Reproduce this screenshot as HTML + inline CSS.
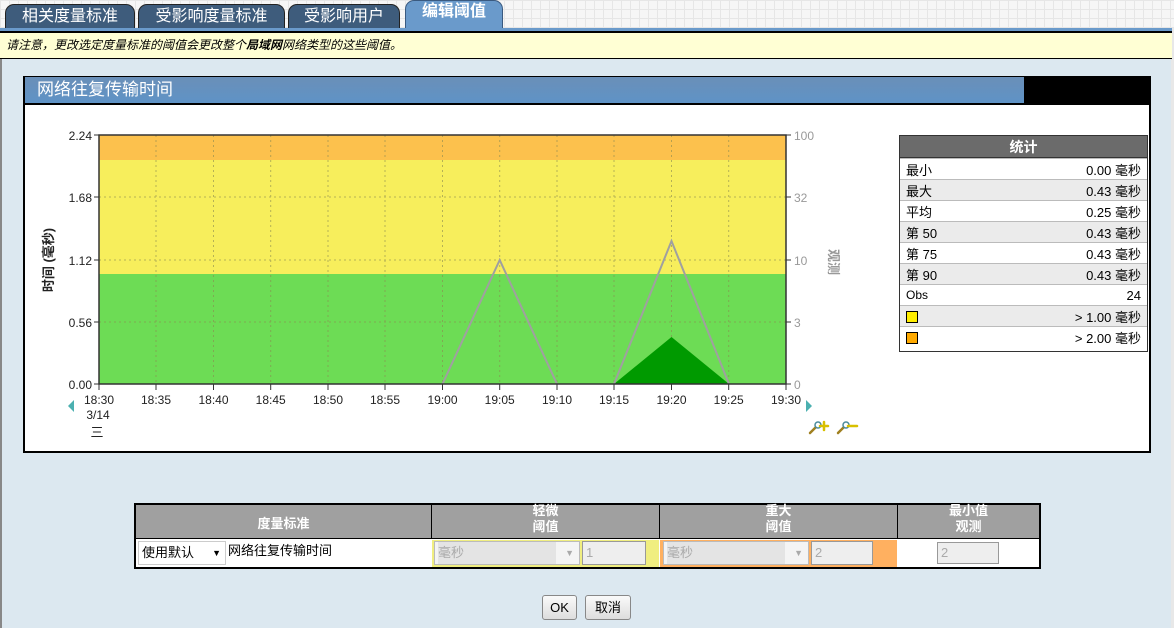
<!DOCTYPE html>
<html><head><meta charset="utf-8"><style>
*{margin:0;padding:0;box-sizing:border-box}
body{width:1174px;height:628px;overflow:hidden;position:relative;background:#dce8f0;font-family:"Liberation Sans","Noto Sans CJK SC",sans-serif;font-size:13px}
.abs{position:absolute}
.tabbar{left:0;top:0;width:1174px;height:28px;background-color:#f6f6f6;background-image:linear-gradient(#e6e6e6 1px,transparent 1px),linear-gradient(90deg,#e6e6e6 1px,transparent 1px);background-size:9px 9px}
.tab{top:4px;height:24px;background:#3e5c7c;border:1px solid #222;border-bottom:none;border-radius:9px 9px 0 0;color:#fff;font-size:16px;text-align:center;line-height:23px}
.tab.act{top:0;height:29px;background:#6a9acb;line-height:22px;border-color:#3a5a80;font-weight:bold}
.stat td{height:21px;padding:0 6px;font-size:13px;border-top:1px solid #bbb}
</style></head><body>
<div class="abs" style="left:0;top:0;width:2px;height:628px;background:#888"></div>
<div class="abs" style="left:1171px;top:0;width:3px;height:628px;background:#e8e8e8"></div>
<div class="abs tabbar"></div>
<div class="abs tab" style="left:5px;width:130px">相关度量标准</div>
<div class="abs tab" style="left:138px;width:147px">受影响度量标准</div>
<div class="abs tab" style="left:288px;width:112px">受影响用户</div>
<div class="abs tab act" style="left:405px;width:98px">编辑阈值</div>
<div class="abs" style="left:0;top:28px;width:1172px;height:3px;background:#6a9acb"></div>
<div class="abs" style="left:0;top:31px;width:1172px;height:2px;background:#000"></div>
<div class="abs" style="left:0;top:33px;width:1172px;height:26px;background:#ffffd4;border-bottom:1px solid #000;font-size:12px;font-style:italic;line-height:25px;padding-left:6px">请注意，更改选定度量标准的阈值会更改整个<b>局域网</b>网络类型的这些阈值。</div>

<div class="abs" style="left:23px;top:76px;width:1128px;height:377px;border:2px solid #000;background:#fff"></div>
<div class="abs" style="left:25px;top:77px;width:1000px;height:26px;background:linear-gradient(#6a8fb8,#5f93c6);color:#fff;font-size:17px;line-height:26px;padding-left:12px">网络往复传输时间</div>
<div class="abs" style="left:1024px;top:77px;width:125px;height:26px;background:#000"></div>
<div class="abs" style="left:25px;top:103px;width:1124px;height:2px;background:#000"></div>

<svg class="abs" style="left:0;top:0" width="1174" height="628">
<rect x="99" y="135" width="687" height="25" fill="#fcc14d"/>
<rect x="99" y="160" width="687" height="114" fill="#f7ee5c"/>
<rect x="99" y="274" width="687" height="110" fill="#6ddc55"/>
<g stroke="#8a8a50" stroke-dasharray="2,3" stroke-width="1" opacity="0.6">
<line x1="99" y1="197" x2="786" y2="197"/><line x1="99" y1="260" x2="786" y2="260"/><line x1="99" y1="322" x2="786" y2="322"/>
<line x1="156" y1="135" x2="156" y2="384"/><line x1="213.5" y1="135" x2="213.5" y2="384"/><line x1="270.7" y1="135" x2="270.7" y2="384"/><line x1="328" y1="135" x2="328" y2="384"/><line x1="385" y1="135" x2="385" y2="384"/><line x1="442.5" y1="135" x2="442.5" y2="384"/><line x1="499.7" y1="135" x2="499.7" y2="384"/><line x1="557" y1="135" x2="557" y2="384"/><line x1="614" y1="135" x2="614" y2="384"/><line x1="671.5" y1="135" x2="671.5" y2="384"/><line x1="728.7" y1="135" x2="728.7" y2="384"/>
</g>
<polygon points="614,384 671.5,337 729,384" fill="#009a00"/>
<polyline points="442.5,384 499.7,260 557,384" fill="none" stroke="#a0a0a0" stroke-width="2"/>
<polyline points="614,384 671.5,241 729,384" fill="none" stroke="#a0a0a0" stroke-width="2"/>
<rect x="99" y="135" width="687" height="249" fill="none" stroke="#333" stroke-width="1.5"/>
<g stroke="#333"><line x1="94" y1="135" x2="99" y2="135"/><line x1="94" y1="197" x2="99" y2="197"/><line x1="94" y1="260" x2="99" y2="260"/><line x1="94" y1="322" x2="99" y2="322"/><line x1="94" y1="384" x2="99" y2="384"/>
<line x1="786" y1="135" x2="791" y2="135"/><line x1="786" y1="197" x2="791" y2="197"/><line x1="786" y1="260" x2="791" y2="260"/><line x1="786" y1="322" x2="791" y2="322"/><line x1="786" y1="384" x2="791" y2="384"/>
<line x1="99" y1="384" x2="99" y2="390"/><line x1="156" y1="384" x2="156" y2="390"/><line x1="213.5" y1="384" x2="213.5" y2="390"/><line x1="270.7" y1="384" x2="270.7" y2="390"/><line x1="328" y1="384" x2="328" y2="390"/><line x1="385" y1="384" x2="385" y2="390"/><line x1="442.5" y1="384" x2="442.5" y2="390"/><line x1="499.7" y1="384" x2="499.7" y2="390"/><line x1="557" y1="384" x2="557" y2="390"/><line x1="614" y1="384" x2="614" y2="390"/><line x1="671.5" y1="384" x2="671.5" y2="390"/><line x1="728.7" y1="384" x2="728.7" y2="390"/><line x1="786" y1="384" x2="786" y2="390"/></g>
<g font-family="Liberation Sans,sans-serif" font-size="12" fill="#222" text-anchor="end">
<text x="92" y="140">2.24</text><text x="92" y="202">1.68</text><text x="92" y="265">1.12</text><text x="92" y="327">0.56</text><text x="92" y="389">0.00</text></g>
<g font-family="Liberation Sans,sans-serif" font-size="12" fill="#999"><text x="794" y="140">100</text><text x="794" y="202">32</text><text x="794" y="265">10</text><text x="794" y="327">3</text><text x="794" y="389">0</text></g>
<g font-family="Liberation Sans,sans-serif" font-size="12" fill="#222" text-anchor="middle">
<text x="99" y="404">18:30</text><text x="156" y="404">18:35</text><text x="213.5" y="404">18:40</text><text x="270.7" y="404">18:45</text><text x="328" y="404">18:50</text><text x="385" y="404">18:55</text><text x="442.5" y="404">19:00</text><text x="499.7" y="404">19:05</text><text x="557" y="404">19:10</text><text x="614" y="404">19:15</text><text x="671.5" y="404">19:20</text><text x="728.7" y="404">19:25</text><text x="786" y="404">19:30</text>
<text x="98" y="419">3/14</text><text x="97" y="437" font-family="Noto Sans CJK SC,sans-serif" font-size="13">三</text></g>
<text transform="translate(53,260) rotate(-90)" text-anchor="middle" font-family="Liberation Sans,Noto Sans CJK SC,sans-serif" font-size="13" font-weight="bold" fill="#222">时间 (毫秒)</text>
<text transform="translate(829,262) rotate(90)" text-anchor="middle" font-family="Noto Sans CJK SC,sans-serif" font-size="13" font-weight="bold" fill="#999">观测</text>
<polygon points="74,400 68,406 74,412" fill="#4bb0b0"/>
<polygon points="806,400 812,406 806,412" fill="#4bb0b0"/>
<g stroke-width="2.5" stroke-linecap="round"><line x1="810" y1="433" x2="816" y2="427" stroke="#a08020"/><circle cx="818" cy="425" r="3" fill="#fff" stroke="#4a8a9a" stroke-width="1.5"/><line x1="820" y1="426" x2="828" y2="426" stroke="#d8c000"/><line x1="824" y1="422" x2="824" y2="430" stroke="#d8c000"/>
<line x1="838" y1="433" x2="844" y2="427" stroke="#a08020"/><circle cx="846" cy="425" r="3" fill="#fff" stroke="#4a8a9a" stroke-width="1.5"/><line x1="848" y1="426" x2="857" y2="426" stroke="#d8c000"/></g>
</svg>

<div class="abs" style="left:899px;top:135px;width:249px;height:217px;border:1px solid #333;background:#fff">
<div style="height:22px;background:#6b6b6b;color:#fff;font-weight:bold;text-align:center;line-height:22px;font-size:14px;border-bottom:1px solid #333">统计</div>
<table class="stat" style="width:100%;border-collapse:collapse">
<tr><td style="background:#fff">最小</td><td style="text-align:right;background:#fff">0.00 毫秒</td></tr>
<tr><td style="background:#ebebeb">最大</td><td style="text-align:right;background:#ebebeb">0.43 毫秒</td></tr>
<tr><td style="background:#fff">平均</td><td style="text-align:right;background:#fff">0.25 毫秒</td></tr>
<tr><td style="background:#ebebeb">第 50</td><td style="text-align:right;background:#ebebeb">0.43 毫秒</td></tr>
<tr><td style="background:#fff">第 75</td><td style="text-align:right;background:#fff">0.43 毫秒</td></tr>
<tr><td style="background:#ebebeb">第 90</td><td style="text-align:right;background:#ebebeb">0.43 毫秒</td></tr>
<tr><td style="background:#fff;font-size:12px">Obs</td><td style="text-align:right;background:#fff">24</td></tr>
<tr><td style="background:#ebebeb"><span style="display:inline-block;width:12px;height:12px;background:#ffee00;border:1px solid #000;vertical-align:middle"></span></td><td style="text-align:right;background:#ebebeb">&gt; 1.00 毫秒</td></tr>
<tr><td style="background:#fff"><span style="display:inline-block;width:12px;height:12px;background:#ffaa00;border:1px solid #000;vertical-align:middle"></span></td><td style="text-align:right;background:#fff">&gt; 2.00 毫秒</td></tr>
</table></div>

<div class="abs" style="left:134px;top:503px;width:907px;height:66px;border:2px solid #000;background:#fff"></div>
<div class="abs" style="left:136px;top:505px;width:903px;height:34px;background:#a0a0a0;border-bottom:1px solid #000"></div>
<div class="abs" style="left:431px;top:505px;width:1px;height:34px;background:#000"></div>
<div class="abs" style="left:659px;top:505px;width:1px;height:34px;background:#000"></div>
<div class="abs" style="left:897px;top:505px;width:1px;height:34px;background:#000"></div>
<div class="abs" style="left:136px;top:513px;width:295px;text-align:center;color:#fff;font-weight:bold;font-size:13px">度量标准</div>
<div class="abs" style="left:432px;top:503px;width:227px;text-align:center;color:#fff;font-weight:bold;font-size:13px;line-height:16px">轻微<br>阈值</div>
<div class="abs" style="left:660px;top:503px;width:237px;text-align:center;color:#fff;font-weight:bold;font-size:13px;line-height:16px">重大<br>阈值</div>
<div class="abs" style="left:898px;top:503px;width:141px;text-align:center;color:#fff;font-weight:bold;font-size:13px;line-height:16px">最小值<br>观测</div>
<div class="abs" style="left:432px;top:540px;width:227px;height:27px;background:#f0ee80"></div>
<div class="abs" style="left:660px;top:540px;width:237px;height:27px;background:#ffb060"></div>
<div class="abs" style="left:138px;top:541px;width:88px;height:24px;border:1px solid #ccc;background:#fff;font-size:13px;line-height:22px;padding-left:3px">使用默认 <span style="font-size:9px;position:absolute;right:4px">▼</span></div>
<div class="abs" style="left:228px;top:540px;font-size:13px">网络往复传输时间</div>
<div class="abs" style="left:434px;top:541px;width:146px;height:24px;border:1px solid #bbb;background:#f4f4f4;color:#aaa;line-height:22px;padding-left:3px"><span style="background:#e4e4e4;display:inline-block;width:118px">毫秒</span><span style="position:absolute;right:5px;font-size:9px">▼</span></div>
<div class="abs" style="left:582px;top:541px;width:64px;height:24px;border:1px solid #999;background:#eee;color:#aaa;line-height:22px;padding-left:3px">1</div>
<div class="abs" style="left:663px;top:541px;width:146px;height:24px;border:1px solid #bbb;background:#f4f4f4;color:#aaa;line-height:22px;padding-left:3px"><span style="background:#e4e4e4;display:inline-block;width:118px">毫秒</span><span style="position:absolute;right:5px;font-size:9px">▼</span></div>
<div class="abs" style="left:811px;top:541px;width:62px;height:24px;border:1px solid #999;background:#eee;color:#aaa;line-height:22px;padding-left:3px">2</div>
<div class="abs" style="left:937px;top:542px;width:62px;height:22px;border:1px solid #999;background:#eee;color:#aaa;line-height:20px;padding-left:3px">2</div>

<div class="abs" style="left:542px;top:595px;width:35px;height:25px;border:1px solid #888;border-radius:3px;background:linear-gradient(#fafafa,#ddd);text-align:center;line-height:23px">OK</div>
<div class="abs" style="left:585px;top:595px;width:46px;height:25px;border:1px solid #888;border-radius:3px;background:linear-gradient(#fafafa,#ddd);text-align:center;line-height:23px">取消</div>
</body></html>
